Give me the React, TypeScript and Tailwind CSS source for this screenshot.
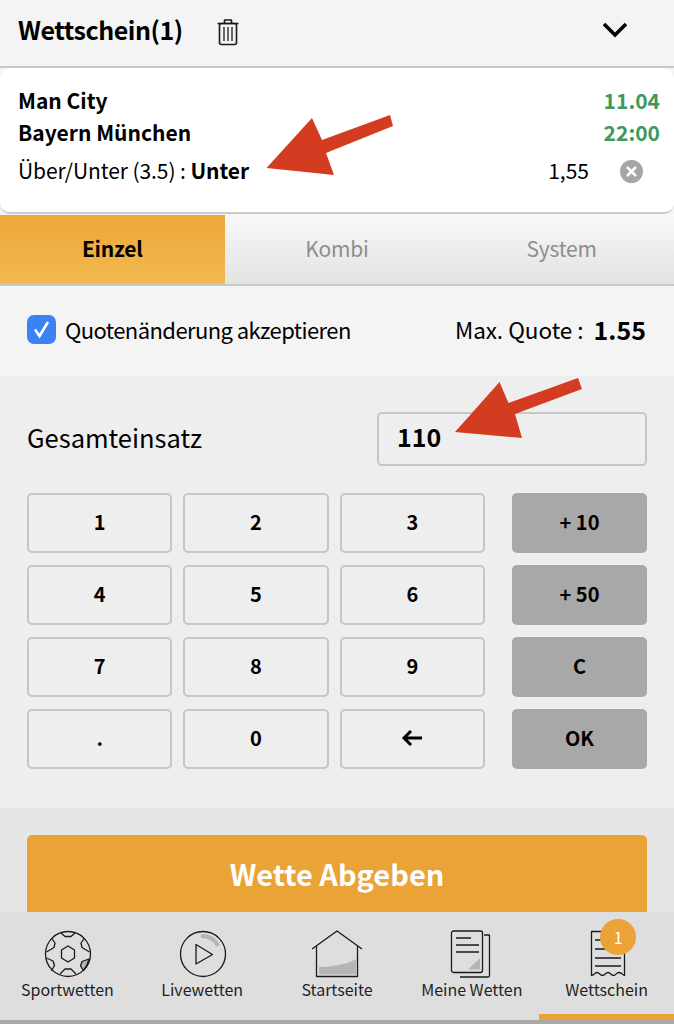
import React from "react";
import { X } from "lucide-react";

const keys = ["1", "2", "3", "4", "5", "6", "7", "8", "9", ".", "0", "back"];
const sideKeys = ["+ 10", "+ 50", "C", "OK"];

const SoccerIcon = () => (
  <svg className="ml-[1px]" width="48" height="48" viewBox="0 0 48 48" fill="none" stroke="#1a1a1a" strokeWidth="1.3" strokeLinejoin="round">
    <circle cx="24" cy="24" r="22.5" />
    <path d="M24 16l6.500 4v8L24 32l-6.500-4v-8z" />
    <path d="M17 3l4 3.500h6L31 3" />
    <path d="M16 44l5-5h6l5 5" />
    <path d="M7.500 8l3.500 5-1 4.500L2.500 22" />
    <path d="M40.500 8L37 13l1 4.500 7.500 4.500" />
    <path d="M2.500 28L9 31l1.500 4.500L7.500 41" />
    <path d="M45 29l-7 2.500-1.500 4.500 3 4.500c2.500-3 4.500-7 5.500-11.500z" fill="#b5b5b5" />
  </svg>
);

const PlayIcon = () => (
  <svg className="ml-[1px]" width="48" height="48" viewBox="0 0 48 48" fill="none" stroke="#1a1a1a" strokeWidth="1.3" strokeLinejoin="round">
    <path d="M22 6c7-.5 14 3 17 10" stroke="#b5b5b5" strokeWidth="4" />
    <circle cx="24" cy="24" r="22.500" />
    <path d="M17 14.500L33.500 24.500L17 34z" />
  </svg>
);

const HomeIcon = () => (
  <svg width="52" height="48" viewBox="0 0 52 48" fill="none" stroke="#1a1a1a" strokeWidth="1.3" strokeLinejoin="round">
    <path d="M8 37c14-.5 27-2 37-8v15.500H8z" fill="#b5b5b5" stroke="none" />
    <path d="M1 19L26 1l25 18" />
    <path d="M5.500 16v30.500h41V16" />
  </svg>
);

const SlipsIcon = () => (
  <svg className="ml-[4px]" width="48" height="48" viewBox="0 0 48 48" fill="none" stroke="#1a1a1a" strokeWidth="1.3" strokeLinejoin="round">
    <path d="M34 5h5.500v40.500a1.500 1.500 0 0 1-1.500 1.500H10" />
    <rect x="1.500" y="1" width="31" height="41.500" rx="2" />
    <path d="M6 8h15M6 15h23M6 22h23" strokeWidth="1.500" />
    <path d="M30 28v11.500H18z" fill="#b5b5b5" stroke="none" />
  </svg>
);

const ReceiptIcon = () => (
  <svg className="ml-[2px]" width="36" height="48" viewBox="0 0 36 48" fill="none" stroke="#1a1a1a" strokeWidth="1.300" strokeLinejoin="round">
    <path d="M1.500 1.500h33v44c-1.500 0-2.500-3-5.500-3s-3 3-5.500 3-3-3-5.500-3-3 3-5.500 3-3-3-5.500-3-3 3-5.500 3z" />
    <path d="M5 10h26M5 19h26M5 28h26M5 36h26" strokeWidth="1.500" />
  </svg>
);

const navItems = [
  { label: "Sportwetten", icon: <SoccerIcon /> },
  { label: "Livewetten", icon: <PlayIcon /> },
  { label: "Startseite", icon: <HomeIcon /> },
  { label: "Meine Wetten", icon: <SlipsIcon /> },
  { label: "Wettschein", icon: <ReceiptIcon />, active: true },
];

const App = () => {
  return (
    <div className="relative h-[1024px] w-[674px] overflow-hidden bg-[#f4f4f4] font-['Noto_Sans_CJK_SC',sans-serif] text-black">
      {/* header */}
      <div className="flex h-[68px] items-center border-b-2 border-[#c8c9c9] pb-[6px] pl-[18px] pr-[46px]">
        <h1 className="text-[25px] font-bold tracking-[-0.45px]">Wettschein(1)</h1>
        <svg className="ml-[33px] mt-[3px]" width="24" height="28" viewBox="0 0 24 28" fill="none" stroke="#1a1a1a" strokeWidth="1.600" strokeLinejoin="round">
          <path d="M1.500 5.500h21M8.500 5.500V2h7v3.500" />
          <rect x="3.500" y="5.500" width="17" height="21" rx="2" />
          <path d="M8 9v14M12 9v14M16 9v14" strokeWidth="1.300" />
        </svg>
        <svg className="ml-auto" width="26" height="18" viewBox="0 0 26 18" fill="none" stroke="#000" strokeWidth="3.600">
          <path d="M2 3l11 11L24 3" />
        </svg>
      </div>

      {/* bet card */}
      <div className="flex h-[146px] flex-col rounded-[10px] border-b-2 border-[#c8cccb] bg-white pl-[18px] pr-[31px] pt-[17px]">
        <div className="flex h-[32px] items-center justify-between">
          <span className="text-[21px] font-bold">Man City</span>
          <span className="mr-[-17px] text-[21px] font-bold text-[#3e9a5c]">11.04</span>
        </div>
        <div className="flex h-[32px] items-center justify-between">
          <span className="text-[21px] font-bold">Bayern München</span>
          <span className="mr-[-17px] text-[21px] font-bold text-[#3e9a5c]">22:00</span>
        </div>
        <div className="mt-[6px] flex h-[32px] items-center">
          <span className="text-[21px] tracking-[-0.08px]">
            Über/Unter (3.5) : <b>Unter</b>
          </span>
          <span className="ml-auto mr-[31px] text-[21px]">1,55</span>
          <span className="flex h-[23px] w-[23px] items-center justify-center rounded-full bg-[#a6a6a6]">
            <X size={15} color="#fff" strokeWidth={4} />
          </span>
        </div>
      </div>

      {/* tabs */}
      <div className="mt-[1px] grid h-[71px] grid-cols-3 border-b-2 border-[#c8c9c9] text-[21px] tracking-[-0.2px]">
        <div className="flex items-center justify-center bg-gradient-to-b from-[#eba73a] to-[#f4b94d] pb-[2px] font-bold">Einzel</div>
        <div className="flex items-center justify-center bg-gradient-to-b from-[#f8f8f8] to-[#e3e3e3] pb-[2px] text-[#8e8e8e]">Kombi</div>
        <div className="flex items-center justify-center bg-gradient-to-b from-[#f8f8f8] to-[#e3e3e3] pb-[2px] text-[#8e8e8e]">System</div>
      </div>

      {/* quote options */}
      <div className="flex h-[90px] items-center pb-[3px] pl-[27px] pr-[28px]">
        <span className="flex h-[29px] w-[29px] items-center justify-center rounded-[7px] bg-[#3b82f6]">
          <svg width="19" height="19" viewBox="0 0 19 19" fill="none" stroke="#fff" strokeWidth="2.600">
            <path d="M3 9.500l4.500 6.500L16 2" />
          </svg>
        </span>
        <span className="ml-[9px] text-[22px] tracking-[-0.58px]">Quotenänderung akzeptieren</span>
        <span className="ml-auto text-[22.500px]">Max. Quote :</span>
        <b className="ml-[10px] text-[25px]">1.55</b>
      </div>

      {/* stake and keypad */}
      <div className="h-[432px] bg-[#eeeeee] px-[27px] pt-[36px]">
        <div className="flex items-center justify-between">
          <span className="pb-[4px] text-[25.500px]">Gesamteinsatz</span>
          <div className="flex h-[54px] w-[270px] items-center rounded-[5px] border-2 border-[#c4c7c7] pb-[4px] pl-[18px] text-[25px] font-bold">110</div>
        </div>
        <div className="mt-[27px] flex justify-between">
          <div className="grid w-[458px] grid-cols-3 gap-x-[11px] gap-y-[12px]">
            {keys.map((key) => (
              <button key={key} className="flex h-[60px] items-center justify-center rounded-[5px] border-2 border-[#c4c7c7] pb-[2px] text-[20px] font-bold">
                {key === "back" ? (
                  <svg width="22" height="18" viewBox="0 0 22 18" fill="none" stroke="#000" strokeWidth="3">
                    <path d="M21 9H3M10 2L3 9l7 7" />
                  </svg>
                ) : (
                  key
                )}
              </button>
            ))}
          </div>
          <div className="flex w-[135px] flex-col gap-[12px]">
            {sideKeys.map((key) => (
              <button key={key} className="flex h-[60px] items-center justify-center rounded-[5px] bg-[#a8a8a8] pb-[2px] text-[20px] font-bold">
                {key}
              </button>
            ))}
          </div>
        </div>
      </div>

      {/* submit */}
      <div className="h-[104px] bg-[#e6e6e6] px-[27px] pt-[27px]">
        <button className="flex h-[77px] w-full items-center justify-center rounded-t-[5px] bg-[#e9a337] text-[29px] font-bold text-white">
          Wette Abgeben
        </button>
      </div>

      {/* bottom nav */}
      <nav className="grid h-[108px] grid-cols-5 bg-[#dedede]">
        {navItems.map((item) => (
          <div key={item.label} className={`relative flex flex-col items-center pt-[18px] ${item.active ? "border-b-[6px] border-[#e9a337]" : ""}`}>
            <div className="flex h-[48px] items-center justify-center">{item.icon}</div>
            <span className="mt-[-1px] text-[16px] text-[#1f1f1f]">{item.label}</span>
            {item.active && (
              <span className="absolute left-[61px] top-[7px] flex h-[36px] w-[36px] items-center justify-center rounded-full bg-[#e9a337] text-[16px] text-white">
                1
              </span>
            )}
          </div>
        ))}
      </nav>
      <div className="h-[4px] bg-[#a8a8a8]" />

      {/* red annotation arrows */}
      <svg className="absolute left-0 top-0" width="674" height="1024" viewBox="0 0 674 1024" fill="#d33c20">
        <path d="M266.500 168L312 118l10 22 68-25 3 11-67 27 8 22z" />
        <path d="M455 432l44.500-50 9 21 69.500-25 4 11-67 25 7 24z" />
      </svg>
    </div>
  );
};

export default App;
